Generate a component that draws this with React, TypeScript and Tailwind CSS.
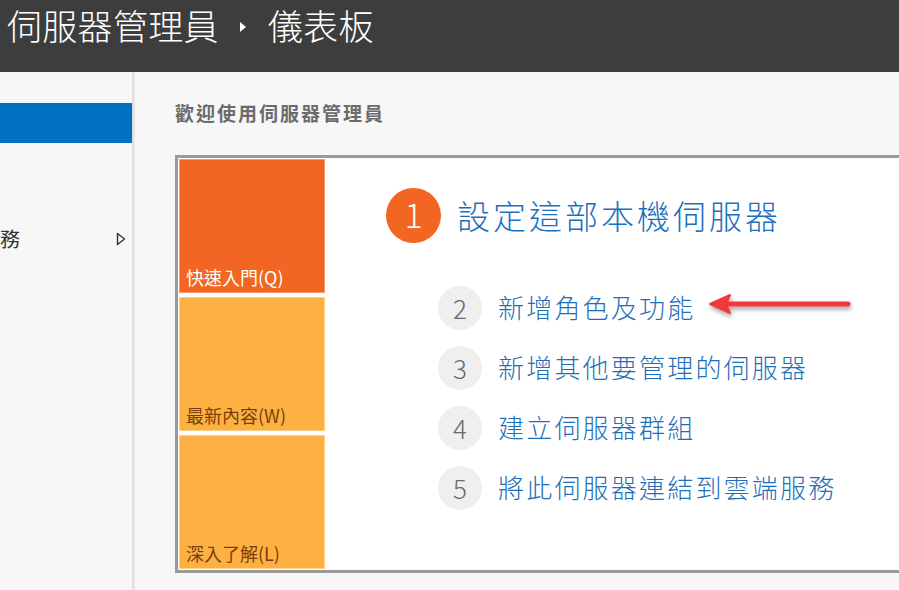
import React from "react";

const CJK = { fontFamily: '"Noto Sans CJK TC", "Noto Sans", sans-serif' };

const items = [
  { n: "2", t: "新增角色及功能" },
  { n: "3", t: "新增其他要管理的伺服器" },
  { n: "4", t: "建立伺服器群組" },
  { n: "5", t: "將此伺服器連結到雲端服務" },
];

export default function App() {
  return (
    <div className="w-[899px] h-[590px] overflow-hidden bg-[#f7f7f7] flex flex-col relative" style={CJK}>
      <header className="h-[72px] shrink-0 bg-[#3d3d3d] flex items-start pl-[7px] pt-[3px] text-white text-[35px] font-light leading-[44px]">
        <span className="tracking-[0.3px]">伺服器管理員</span>
        <svg width="10" height="14" viewBox="0 0 10 14" className="ml-[19px] mr-[20px] mt-[17px]">
          <path d="M2 2 L8 7 L2 12 Z" fill="#ffffff" />
        </svg>
        <span className="tracking-[0.3px]">儀表板</span>
      </header>
      <div className="flex flex-1 min-h-0">
        <aside className="w-[132px] shrink-0 flex flex-col overflow-hidden">
          <div className="mt-[31px] h-[40px] bg-[#0070c0]" />
          <div className="mt-[84px] h-[24px] flex items-center justify-between pr-[6px]">
            <span className="text-[20px] text-[#333] leading-[24px]">務</span>
            <svg width="10" height="14" viewBox="0 0 10 14">
              <path d="M1.5 1.5 L8.5 7 L1.5 12.5 Z" fill="none" stroke="#333" strokeWidth="1.4" strokeLinejoin="round" />
            </svg>
          </div>
        </aside>
        <div className="w-[3px] shrink-0 bg-[#dedede] border-r border-[#ebebeb]" />
        <main className="flex-1 flex flex-col pl-[40px] min-w-0">
          <div className="mt-[26px] h-[30px] text-[19px] font-bold text-[#6b6b6b] tracking-[2px] leading-[30px]">
            歡迎使用伺服器管理員
          </div>
          <div className="mt-[27px] w-[840px] h-[418px] shrink-0 border-[3px] border-[#9a9a9a] bg-white p-px flex">
            <div className="w-[146px] shrink-0 flex flex-col gap-[4px]">
              <div className="h-[134px] bg-[#f26522] border border-[#f79a6a] flex items-end px-[6px] pb-[3px]">
                <span className="text-[18px] text-white leading-[24px]">快速入門(Q)</span>
              </div>
              <div className="h-[134px] bg-[#fdb143] border border-[#fed08a] flex items-end px-[6px] pb-[3px]">
                <span className="text-[18px] text-[#7a3d0c] leading-[24px]">最新內容(W)</span>
              </div>
              <div className="h-[134px] bg-[#fdb143] border border-[#fed08a] flex items-end px-[6px] pb-[3px]">
                <span className="text-[18px] text-[#7a3d0c] leading-[24px]">深入了解(L)</span>
              </div>
            </div>
            <div className="flex flex-col pl-[61px] pt-[28px]">
              <div className="flex items-center gap-[16px] h-[56px]">
                <div className="w-[55px] h-[55px] rounded-full bg-[#f26522] flex items-center justify-center text-white text-[34px] font-light leading-none pb-[2px]">
                  1
                </div>
                <span className="text-[33px] font-light text-[#1c6fbf] tracking-[3px] leading-[44px]">設定這部本機伺服器</span>
              </div>
              <div className="flex flex-col pl-[52px] mt-[43px] gap-[16px]">
                {items.map((it) => (
                  <div key={it.n} className="flex items-center gap-[16px] h-[44px]">
                    <div className="w-[44px] h-[44px] rounded-full bg-[#efefef] flex items-center justify-center text-[#6a6a6a] text-[26px] font-light leading-none">
                      {it.n}
                    </div>
                    <span className="text-[26px] font-light text-[#1f6fb8] tracking-[2.2px] leading-[36px] -mt-[3px]">{it.t}</span>
                  </div>
                ))}
              </div>
            </div>
          </div>
        </main>
      </div>
      <svg className="absolute left-[705px] top-[288px]" width="160" height="36" viewBox="0 0 160 36">
        <defs>
          <filter id="sh" x="-10%" y="-50%" width="130%" height="200%">
            <feDropShadow dx="1" dy="3" stdDeviation="2" floodColor="#000" floodOpacity="0.35" />
          </filter>
        </defs>
        <g filter="url(#sh)">
          <line x1="22" y1="16" x2="143" y2="16" stroke="#f0393d" strokeWidth="5" strokeLinecap="round" />
          <path d="M5 16 L25 7 L21 16 L25 25 Z" fill="#f0393d" stroke="#f0393d" strokeWidth="2" strokeLinejoin="round" />
        </g>
      </svg>
    </div>
  );
}
